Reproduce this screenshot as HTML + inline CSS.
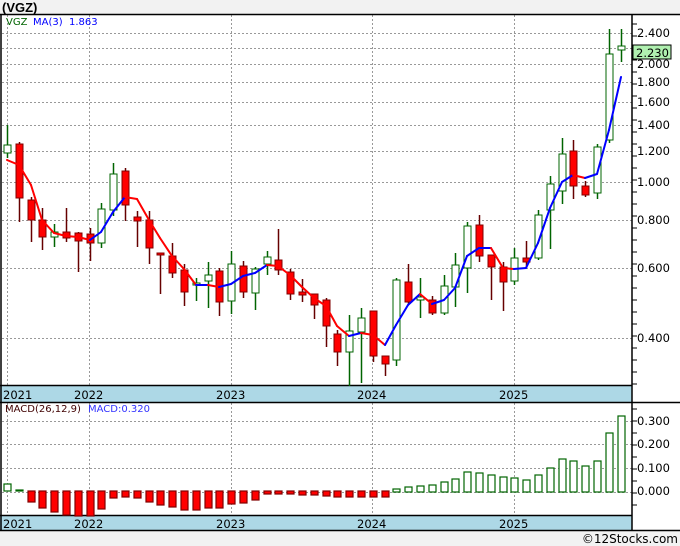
<!DOCTYPE html>
<html><head><meta charset="utf-8"><style>
html,body{margin:0;padding:0;background:#f2f2f2;width:680px;height:546px;overflow:hidden}
svg{display:block}
text{font-family:"DejaVu Sans","Liberation Sans",sans-serif;font-size:11.5px}
</style></head><body>
<svg id="s" width="680" height="546" xmlns="http://www.w3.org/2000/svg">
<rect x="0" y="0" width="680" height="546" fill="#f2f2f2"/>
<rect x="0" y="14" width="680" height="517" fill="#fff"/>
<text x="2" y="12" style="font-family:'Liberation Sans',sans-serif;font-size:13px;font-weight:bold">(VGZ)</text>
<g id="grid" stroke="#999" stroke-width="1" stroke-dasharray="2,2"></g>
<rect x="0" y="386" width="632" height="16" fill="#add8e6"/>
<rect x="0" y="516" width="632" height="14" fill="#add8e6"/>
<g stroke="#000" stroke-width="1.5">
<line x1="0" y1="14.5" x2="680" y2="14.5"/>
<line x1="1" y1="14" x2="1" y2="531"/>
<line x1="632" y1="14" x2="632" y2="531"/>
<line x1="0" y1="385.5" x2="632" y2="385.5"/>
<line x1="0" y1="402.5" x2="680" y2="402.5"/>
<line x1="0" y1="515.5" x2="632" y2="515.5"/>
<line x1="0" y1="530.5" x2="680" y2="530.5"/>
</g>
<g id="ticks" stroke="#000"></g>
<g id="c"></g>
<g fill="#000">
<text x="3" y="399">2021</text><text x="74" y="399">2022</text><text x="216" y="399">2023</text><text x="357" y="399">2024</text><text x="499" y="399">2025</text>
<text x="3" y="528">2021</text><text x="74" y="528">2022</text><text x="216" y="528">2023</text><text x="357" y="528">2024</text><text x="499" y="528">2025</text>
</g>
<g fill="#000">
<text x="637" y="37">2.400</text><text x="637" y="68">2.000</text><text x="637" y="86">1.800</text><text x="637" y="106">1.600</text><text x="637" y="129">1.400</text><text x="637" y="155">1.200</text><text x="637" y="186">1.000</text><text x="637" y="224">0.800</text><text x="637" y="272">0.600</text><text x="637" y="342">0.400</text>
<text x="637" y="425">0.300</text><text x="637" y="448">0.200</text><text x="637" y="472">0.100</text><text x="637" y="495">0.000</text>
</g>
<rect x="633" y="45" width="38" height="14" fill="#b0f0b0" stroke="#000"/>
<text x="636" y="57" fill="#000">2.230</text>
<text x="6" y="25" fill="#006400" style="font-size:10px">VGZ</text>
<text x="33" y="25" fill="#0000ff" style="font-size:10px">MA(3)</text>
<text x="69" y="25" fill="#0000ff" style="font-size:10px">1.863</text>
<text x="5" y="412" fill="#400000" style="font-size:10px">MACD(26,12,9)</text>
<text x="88" y="412" fill="#3333ff" style="font-size:10px">MACD:0.320</text>
<text x="678" y="543" text-anchor="end" fill="#000" style="font-size:12px">©12Stocks.com</text>
</svg>
<script>
var NS="http://www.w3.org/2000/svg";
function el(p,t,a){var e=document.createElementNS(NS,t);for(var k in a)e.setAttribute(k,a[k]);p.appendChild(e);return e;}
var g=document.getElementById('grid');
[33,48,64,82,102,125,151,182,220,268,338].forEach(function(y){el(g,'line',{x1:2,y1:y+.5,x2:632,y2:y+.5});});
[421,444,468,492].forEach(function(y){el(g,'line',{x1:2,y1:y+.5,x2:632,y2:y+.5});});
[7,89,231,372,514].forEach(function(x){el(g,'line',{x1:x+.5,y1:15,x2:x+.5,y2:385});el(g,'line',{x1:x+.5,y1:403,x2:x+.5,y2:515});});
var tk=document.getElementById('ticks');
for(var y=24;y<385;y+=12)el(tk,'line',{x1:632,y1:y,x2:637,y2:y});
for(var y=409;y<515;y+=12)el(tk,'line',{x1:632,y1:y,x2:637,y2:y});
var C=[[145,153,125,158,1],[144,198,142,222,0],[200,220,197,242,0],[220,237,208,250,0],[232,237,224,247,1],[232,238,208,242,0],[233,241,232,272,0],[234,243,228,261,0],[209,243,203,248,1],[174,210,163,216,1],[171,205,168,221,0],[217,221,211,247,0],[220,248,211,264,0],[253,255,253,294,0],[256,273,243,278,0],[270,292,264,306,0],[283,285,278,301,1],[275,281,262,308,1],[271,302,268,316,0],[264,301,251,314,1],[266,292,261,298,0],[269,293,267,310,1],[257,264,251,275,1],[260,270,229,275,0],[272,294,269,300,0],[292,295,279,302,0],[294,305,294,319,0],[300,326,298,347,0],[334,352,330,366,0],[331,352,315,386,1],[318,332,308,383,1],[311,356,311,362,0],[356,364,356,376,0],[280,360,278,366,1],[282,302,264,305,0],[297,300,278,318,1],[300,313,296,315,0],[286,313,275,315,1],[265,287,253,307,1],[226,268,222,293,1],[225,256,215,262,0],[255,267,255,300,0],[267,282,262,311,0],[258,281,248,285,1],[258,262,241,268,0],[215,258,210,260,1],[184,210,176,249,1],[154,191,138,204,1],[151,186,140,199,0],[186,195,181,197,0],[147,193,144,199,1],[54,140,29,143,1],[46,50,29,62,1]];
var MA=[160,165,185,220,233,236,237,240,232,212,197,199,220,238,256,269,285,285,287,284,276,273,265,266,275,287,298,306,326,336,333,335,345,325,305,294,304,300,288,256,248,248,268,269,268,243,208,182,175,178,174,130,77];
var M=[[484,491,1],[490,491,1],[491,502,0],[491,508,0],[491,512,0],[491,515,0],[491,516,0],[491,516,0],[491,509,0],[491,498,0],[491,497,0],[491,498,0],[491,502,0],[491,505,0],[491,507,0],[491,510,0],[491,510,0],[491,508,0],[491,508,0],[491,504,0],[491,503,0],[491,500,0],[491,494,0],[491,494,0],[491,494,0],[491,495,0],[491,495,0],[491,496,0],[491,497,0],[491,497,0],[491,497,0],[491,497,0],[491,497,0],[489,492,1],[487,492,1],[486,492,1],[485,492,1],[482,492,1],[479,492,1],[472,492,1],[473,492,1],[475,492,1],[477,492,1],[478,492,1],[480,492,1],[475,492,1],[468,492,1],[459,492,1],[461,492,1],[466,492,1],[461,492,1],[433,492,1],[416,492,1]];
var c=document.getElementById('c');
function X(i){return Math.round(7+11.8*i);}
C.forEach(function(d,i){var x=X(i)+.5;var up=d[4];var col=up?'#006400':'#660000';
el(c,'line',{x1:x,y1:d[2],x2:x,y2:d[3],stroke:col,'stroke-width':1.5});
el(c,'rect',{x:x-3.5,y:d[0],width:7,height:Math.max(1,d[1]-d[0]),fill:up?'#fff':'#ff0000',stroke:up?'#006400':'#800000','stroke-width':1});});
for(var i=1;i<MA.length;i++){el(c,'line',{x1:X(i-1),y1:MA[i-1],x2:X(i),y2:MA[i],stroke:MA[i]<=MA[i-1]?'#0000ff':'#ff0000','stroke-width':2,'stroke-linecap':'round'});}
M.forEach(function(d,i){var x=X(i)+.5;var up=d[2];var h=Math.max(1,d[1]-d[0]);
el(c,'rect',{x:x-3.5,y:d[0],width:7,height:h,fill:up?'#fff':'#ff0000',stroke:up?'#006400':'#800000','stroke-width':1.2});});
</script>
</body></html>
